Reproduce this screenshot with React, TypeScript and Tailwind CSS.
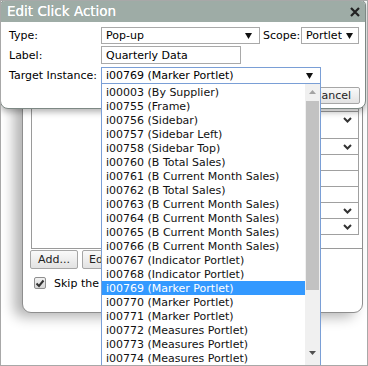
import type { ReactNode } from "react";

const ITEMS = [
  "i00003 (By Supplier)",
  "i00755 (Frame)",
  "i00756 (Sidebar)",
  "i00757 (Sidebar Left)",
  "i00758 (Sidebar Top)",
  "i00760 (B Total Sales)",
  "i00761 (B Current Month Sales)",
  "i00762 (B Total Sales)",
  "i00763 (B Current Month Sales)",
  "i00764 (B Current Month Sales)",
  "i00765 (B Current Month Sales)",
  "i00766 (B Current Month Sales)",
  "i00767 (Indicator Portlet)",
  "i00768 (Indicator Portlet)",
  "i00769 (Marker Portlet)",
  "i00770 (Marker Portlet)",
  "i00771 (Marker Portlet)",
  "i00772 (Measures Portlet)",
  "i00773 (Measures Portlet)",
  "i00774 (Measures Portlet)",
];

const SELECTED = "i00769 (Marker Portlet)";

// rows of the grid in the dialog behind: [height, has dropdown chevron]
const BACK_ROWS: [number, boolean][] = [
  [16, false],
  [27, true],
  [16, true],
  [16, false],
  [16, false],
  [16, false],
  [16, true],
  [16, true],
];

function Arrow() {
  return (
    <svg width="7" height="6" viewBox="0 0 7 6" className="shrink-0">
      <polygon points="0,0 7,0 3.5,6" fill="#111" />
    </svg>
  );
}

function Chevron() {
  return (
    <svg width="9" height="6" viewBox="0 0 9 6">
      <polyline points="1,1 4.5,4.5 8,1" fill="none" stroke="#333" strokeWidth="2" />
    </svg>
  );
}

function FakeSelect({ value, className, focus }: { value: string; className: string; focus?: boolean }) {
  return (
    <div
      className={`flex items-center justify-between bg-white border ${
        focus ? "border-[#7a9fd6]" : "border-[#a9a9a9]"
      } ${className}`}
    >
      <span className="truncate">{value}</span>
      <Arrow />
    </div>
  );
}

function Label({ children }: { children: ReactNode }) {
  return <span className="w-[92px] shrink-0">{children}</span>;
}

function Button({ children, className }: { children: ReactNode; className: string }) {
  return (
    <div
      className={`flex items-center rounded-[2px] border border-[#a6a6a6] bg-gradient-to-b from-[#fafafa] to-[#e2e2e2] text-[#222] ${className}`}
    >
      {children}
    </div>
  );
}

export default function App() {
  return (
    <div className="relative w-[368px] h-[366px] overflow-hidden bg-white font-['DejaVu_Sans',sans-serif] text-[11px] leading-none text-black">
      {/* window behind the active dialog */}
      <div className="absolute left-[22px] top-[40px] w-[341px] h-[273px] bg-white border border-[#8e8e8e] rounded-b-[9px] shadow-[-8px_4px_13px_rgba(0,0,0,0.3)] pl-[8px] pt-[20px]">
        <div className="flex justify-end h-[188px] border-l border-b border-[#9a9a9a] pr-[3px]">
          <div className="flex flex-col w-[100px] pt-[35px]">
            {BACK_ROWS.map(([h, chev], i) => (
              <div
                key={i}
                style={{ height: h }}
                className="flex justify-end items-start pt-[5px] pr-[6px] border-r border-b border-[#a0a0a0]"
              >
                {chev && <Chevron />}
              </div>
            ))}
          </div>
        </div>
        <div className="flex gap-[4px] mt-[1px]">
          <Button className="w-[48px] h-[19px] -ml-[1px] justify-center">Add...</Button>
          <Button className="w-[52px] h-[19px] pl-[6px]">
            <span className="w-[16px] whitespace-nowrap">Ed</span>
          </Button>
        </div>
        <div className="flex items-center gap-[8px] mt-[8px] ml-[3px]">
          <div className="w-[12px] h-[12px] border border-[#8f8f8f] rounded-[2px] bg-gradient-to-b from-[#f2f2f2] to-[#d6d6d6] flex items-center justify-center">
            <svg width="10" height="9" viewBox="0 0 10 9">
              <polyline points="1.5,4.5 4,7 8.5,1.5" fill="none" stroke="#333" strokeWidth="2" />
            </svg>
          </div>
          <span className="w-[46px] overflow-hidden whitespace-nowrap">Skip the</span>
        </div>
      </div>

      {/* active dialog */}
      <div className="absolute left-0 top-0 w-[366px] h-[109px] bg-white border border-[#7d8884] rounded-t-[5px] rounded-b-[8px] shadow-[0_3px_6px_rgba(0,0,0,0.3)] overflow-hidden">
        <div className="flex items-center justify-between h-[21px] bg-[#9eaca6] pl-[6px] pr-[5px]">
          <span className="text-[13.5px] text-white [text-shadow:0_0_0.6px_#fff]">Edit Click Action</span>
          <svg width="10" height="10" viewBox="0 0 10 10">
            <path d="M1 1 L9 9 M9 1 L1 9" stroke="#222" strokeWidth="2.2" />
          </svg>
        </div>
        <div className="flex flex-col pl-[8px] pt-[5px]">
          <div className="flex items-center h-[17px]">
            <Label>Type:</Label>
            <FakeSelect value="Pop-up" className="w-[159px] h-[17px] pl-[4px] pr-[7px]" />
            <span className="ml-[3px] w-[38px]">Scope:</span>
            <FakeSelect value="Portlet" className="w-[58px] h-[17px] pl-[4px] pr-[5px]" />
          </div>
          <div className="flex items-center h-[18px] mt-[2px]">
            <Label>Label:</Label>
            <div className="flex items-center w-[140px] h-[18px] border border-[#a9a9a9] pl-[4px]">Quarterly Data</div>
          </div>
          <div className="flex items-center h-[17px] mt-[3px]">
            <Label>Target Instance:</Label>
            <FakeSelect value="i00769 (Marker Portlet)" focus className="w-[220px] h-[17px] pl-[4px] pr-[7px]" />
          </div>
          <div className="flex justify-end mt-[3px] pr-[5px]">
            <Button className="w-[55px] h-[17px] justify-center">Cancel</Button>
          </div>
        </div>
      </div>

      {/* open dropdown list */}
      <div className="absolute left-[101px] top-[84px] w-[220px] h-[284px] bg-white border border-t-0 border-[#7a9fd6] pt-[1px] flex">
        <div className="flex flex-col flex-1">
          {ITEMS.map((it) => (
            <div
              key={it}
              className={`h-[14px] flex items-center pl-[4px] whitespace-nowrap ${
                it === SELECTED ? "bg-[#3399ff] text-white" : "text-[#111]"
              }`}
            >
              {it}
            </div>
          ))}
        </div>
        <div className="w-[15px] -mt-[1px] bg-[#f0f0f0] flex flex-col items-center">
          <svg width="7" height="4" viewBox="0 0 7 4" className="mt-[6px]">
            <polygon points="0,4 7,4 3.5,0" fill="#a3a3a3" />
          </svg>
          <div className="w-[13px] h-[189px] mt-[7px] bg-[#c2c2c2]" />
          <svg width="7" height="4" viewBox="0 0 7 4" className="mt-[61px]">
            <polygon points="0,0 7,0 3.5,4" fill="#505050" />
          </svg>
        </div>
      </div>

      <div className="pointer-events-none absolute inset-0 border border-[#a8a8a8]" />
    </div>
  );
}
